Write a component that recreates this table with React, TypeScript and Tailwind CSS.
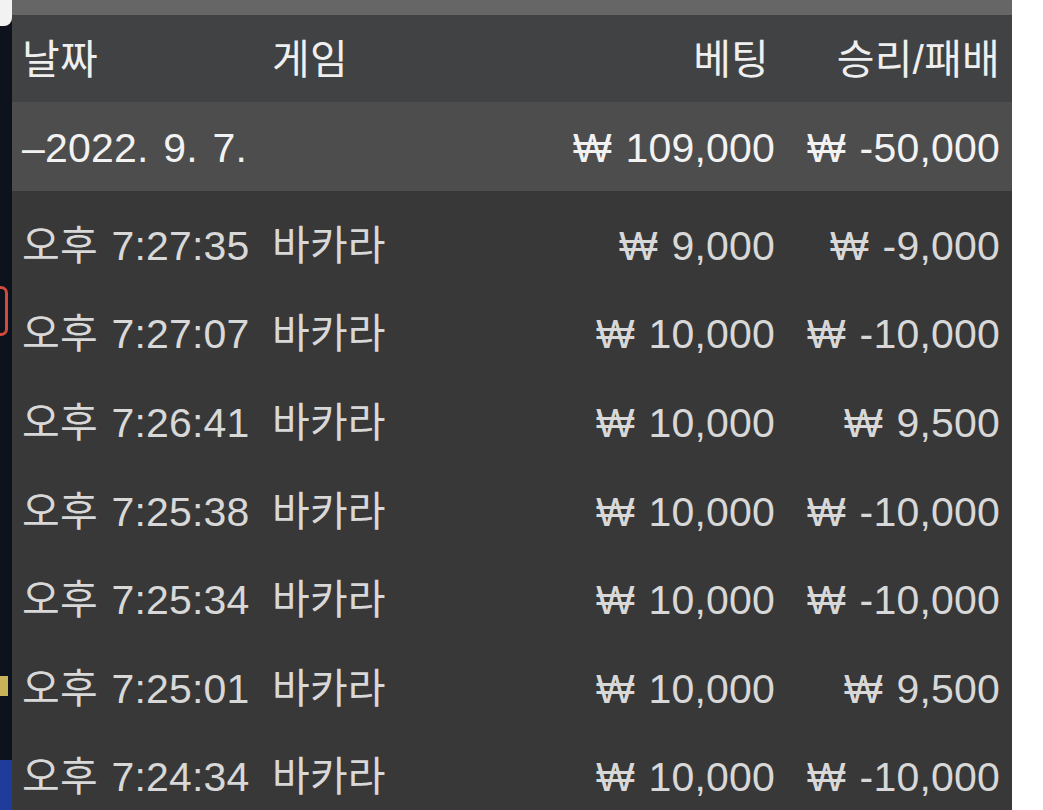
const ROWS = [
  { time: '오후 7:27:35', game: '바카라', bet: '₩ 9,000', result: '₩ -9,000' },
  { time: '오후 7:27:07', game: '바카라', bet: '₩ 10,000', result: '₩ -10,000' },
  { time: '오후 7:26:41', game: '바카라', bet: '₩ 10,000', result: '₩ 9,500' },
  { time: '오후 7:25:38', game: '바카라', bet: '₩ 10,000', result: '₩ -10,000' },
  { time: '오후 7:25:34', game: '바카라', bet: '₩ 10,000', result: '₩ -10,000' },
  { time: '오후 7:25:01', game: '바카라', bet: '₩ 10,000', result: '₩ 9,500' },
  { time: '오후 7:24:34', game: '바카라', bet: '₩ 10,000', result: '₩ -10,000' },
];

const font = { fontFamily: '"Liberation Sans", "Noto Sans CJK KR", sans-serif' };

export default function App() {
  return (
    <div className="flex h-[810px] w-[1043px] overflow-hidden bg-white" style={font}>
      {/* ── Backdrop strip ── */}
      <div className="flex w-[12px] shrink-0 flex-col bg-[#0e121d]">
        <div className="h-[26px] shrink-0 rounded-br-lg bg-[#f2f2f2]" />
        <div className="h-[260px] shrink-0" />
        <div className="ml-[-6px] h-[50px] w-[14px] shrink-0 rounded-full border-[3px] border-[#d24a3c]" />
        <div className="h-[340px] shrink-0" />
        <div className="h-[20px] w-[8px] shrink-0 bg-[#c9b35a]" />
        <div className="flex-1" />
        <div className="h-[50px] shrink-0 bg-[#1f3c9a]" />
      </div>

      {/* ── Panel ── */}
      <div className="flex w-[1000px] shrink-0 flex-col bg-[#383838] text-[41px] leading-none tracking-[0.2px] [word-spacing:2px]">
        <div className="h-[15px] shrink-0 bg-[#666666]" />

        <div className="flex h-[87px] shrink-0 items-center bg-[#414243] pl-[10px] pr-[12px] pt-[4px] text-[#efefef]">
          <div className="w-[250px] shrink-0">날짜</div>
          <div className="flex-1">게임</div>
          <div className="w-[220px] pr-[6px] text-right">베팅</div>
          <div className="w-[225px] text-right">승리/패배</div>
        </div>

        <div className="flex h-[89px] shrink-0 items-center bg-[#4d4d4d] pl-[10px] pr-[12px] pt-[4px] text-[#f2f2f2]">
          <div className="w-[250px] shrink-0 whitespace-nowrap [word-spacing:3px]">–2022. 9. 7.</div>
          <div className="flex-1" />
          <div className="w-[220px] whitespace-nowrap text-right">₩ 109,000</div>
          <div className="w-[225px] whitespace-nowrap text-right">₩ -50,000</div>
        </div>

        <div className="flex shrink-0 flex-col pt-[9px] text-[#d8d8d8]">
          {ROWS.map((r, i) => (
            <div key={i} className="flex h-[88.6px] shrink-0 items-center pl-[10px] pr-[12px] pt-[4px]">
              <div className="w-[250px] shrink-0 whitespace-nowrap">{r.time}</div>
              <div className="flex-1">{r.game}</div>
              <div className="w-[220px] whitespace-nowrap text-right">{r.bet}</div>
              <div className="w-[225px] whitespace-nowrap text-right">{r.result}</div>
            </div>
          ))}
        </div>
      </div>

      <div className="flex-1 bg-white" />
    </div>
  );
}
